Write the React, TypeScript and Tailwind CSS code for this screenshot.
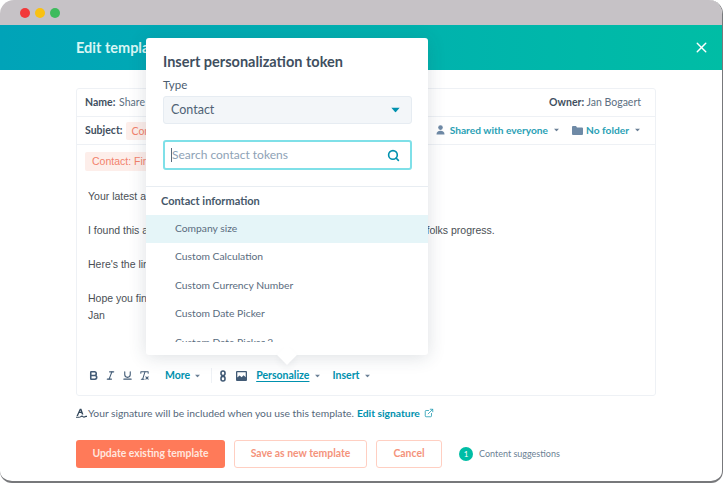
import { Search, X, ExternalLink, Bold, Italic, Underline, RemoveFormatting } from "lucide-react";

function Caret({ className = "" }: { className?: string }) {
  return (
    <svg width="7" height="4" viewBox="0 0 7 4" className={className}>
      <path d="M0 0h7L3.5 4z" fill="currentColor" />
    </svg>
  );
}

function PersonIcon() {
  return (
    <svg width="9" height="10" viewBox="0 0 9 10" className="mr-[5px] text-[#6f8aa6]" fill="currentColor">
      <circle cx="4.5" cy="2.6" r="2.3" />
      <path d="M0.5 9.5C0.5 7 2 5.8 4.5 5.8S8.5 7 8.5 9.5z" />
    </svg>
  );
}

function FolderIcon() {
  return (
    <svg width="11" height="9" viewBox="0 0 11 9" className="ml-[12px] mr-[3px] text-[#6f8aa6]" fill="currentColor">
      <path d="M0 1a1 1 0 0 1 1-1h3l1 1.4h5a1 1 0 0 1 1 1V8a1 1 0 0 1-1 1H1a1 1 0 0 1-1-1z" />
    </svg>
  );
}

function LinkIcon() {
  return (
    <svg width="6" height="12" viewBox="0 0 6 12" className="ml-[8px]" fill="none" stroke="currentColor" strokeWidth="1.6">
      <rect x="1" y="1" width="4" height="4.6" rx="2" />
      <rect x="1" y="6.4" width="4" height="4.6" rx="2" />
    </svg>
  );
}

function PictureIcon() {
  return (
    <svg width="11" height="10" viewBox="0 0 11 10" className="ml-[10px]" fill="currentColor">
      <path fillRule="evenodd" d="M0 1a1 1 0 0 1 1-1h9a1 1 0 0 1 1 1v8a1 1 0 0 1-1 1H1a1 1 0 0 1-1-1zM1.3 1.3v5.2L3.6 4.4l2 1.8 2-2 2.1 2V1.3z" />
    </svg>
  );
}

function SignatureIcon() {
  return (
    <svg width="11" height="10" viewBox="0 0 11 10" className="mr-[1px] text-[#33475b]" fill="currentColor">
      <path d="M0.5 8L3.8 0.8h1.6L7.4 6.5H5.9L5.3 5H3.2L2 8zM3.7 3.8h1.2L4.4 2.3z" />
      <path d="M0 8.8h3c1.5 0 1.5-1.4 3-1.4s1 1.1 2 1.1 1-.7 3-.7v1.2c-1.6 0-2 .7-3 .7s-1.1-1-2-1-1.4 1-3 1H0z" />
    </svg>
  );
}

const tokens = ["Custom Calculation", "Custom Currency Number", "Custom Date Picker"];

function TokenPopover() {
  return (
    <div className="absolute left-[146px] top-[38px] w-[282px] h-[317px] bg-white rounded-[3px] shadow-[0_2px_18px_rgba(45,62,80,0.16)] text-[#33475b]">
      <div className="pl-[17px] pr-[16px] pt-[15px]">
        <div className="text-[14.5px] leading-[18px] font-bold text-[#3f4f60]">Insert personalization token</div>
        <div className="mt-[7px] text-[11.5px] leading-[14px] text-[#4b5d70]">Type</div>
        <div className="mt-[4px] h-[28px] flex items-center justify-between pl-[7px] pr-[12px] bg-[#f3f6f9] border border-[#e6ecf2] rounded-[3px] text-[12.5px] text-[#4f6275]">
          Contact
          <Caret className="text-[#0091ae] scale-125" />
        </div>
        <div className="mt-4 h-[30px] flex items-center justify-between pl-[6px] pr-[10px] border-2 border-[#7fe0e8] rounded-[3px] text-[12px] text-[#8ea2b6]">
          <span className="border-l border-[#5b6b7c] leading-[14px]">Search contact tokens</span>
          <Search size={13} strokeWidth={3} className="text-[#0091ae]" />
        </div>
      </div>
      <div className="mt-[16px] border-t border-[#e8edf2] pt-[6px]">
        <div className="pl-[15px] text-[11px] leading-[16px] font-bold text-[#46586a]">Contact information</div>
        <div className="mt-[6px] h-[28px] pl-[29px] flex items-center bg-[#e5f5f8] text-[10.3px] text-[#5a6c7e]">Company size</div>
        {tokens.map((t) => (
          <div key={t} className="h-[28.3px] pl-[29px] flex items-center text-[10.3px] text-[#5a6c7e]">{t}</div>
        ))}
        <div className="h-[14px] overflow-hidden pl-[29px] pt-[7px] text-[10.3px] leading-[14px] text-[#5a6c7e]">Custom Date Picker 2</div>
      </div>
      <div className="absolute left-[134px] bottom-[-7px] w-[14px] h-[14px] rotate-45 bg-white shadow-[3px_3px_6px_rgba(45,62,80,0.06)]" />
    </div>
  );
}

function Toolbar() {
  return (
    <div className="h-[36px] pb-[3px] flex items-center pl-[11px] text-[#425b76]">
      <div className="flex items-center gap-[6px]">
        <Bold size={11} strokeWidth={3.4} />
        <Italic size={11} strokeWidth={2.4} />
        <Underline size={11} strokeWidth={2.4} />
        <RemoveFormatting size={11} strokeWidth={2.2} />
      </div>
      <div className="ml-[15px] flex items-center gap-[4px] text-[10.5px] font-bold text-[#0091ae]">
        More <Caret className="scale-75 text-[#6b8096]" />
      </div>
      <div className="ml-[10px] w-px h-[15px] bg-[#eef1f5]" />
      <LinkIcon />
      <PictureIcon />
      <div className="ml-[9px] flex items-center gap-[5px] text-[10.5px] font-bold text-[#0091ae]">
        <span className="underline underline-offset-2">Personalize</span>
        <Caret className="scale-75 text-[#6b8096]" />
      </div>
      <div className="ml-[11px] flex items-center gap-[5px] text-[10.5px] font-bold text-[#0091ae]">
        Insert <Caret className="scale-75 text-[#6b8096]" />
      </div>
    </div>
  );
}

function EditorCard() {
  return (
    <div className="ml-[76px] mt-[18px] w-[580px] h-[308px] flex flex-col border border-[#eef1f5] rounded-[3px] text-[#33475b]">
      <div className="h-[28px] shrink-0 flex items-center justify-between pl-[8px] pr-[14px] border-b border-[#eef1f5] text-[10.5px]">
        <div><b className="text-[#3f4f60]">Name:</b> <span className="ml-[1px] text-[#5c6f82]">Share</span></div>
        <div><b className="text-[#3f4f60]">Owner:</b> <span className="text-[#5c6f82]">Jan Bogaert</span></div>
      </div>
      <div className="h-[28px] shrink-0 flex items-center justify-between pl-[8px] pr-[14px] border-b border-[#eef1f5] text-[10.5px]">
        <div className="flex items-center gap-[3px]">
          <b className="text-[#3f4f60]">Subject:</b>
          <span className="px-[6px] leading-[18px] rounded-[2px] bg-[#fdeeea] text-[#f2826c]">Contact</span>
        </div>
        <div className="flex items-center text-[10.2px] font-bold text-[#2a9fb5]">
          <PersonIcon />
          Shared with everyone
          <Caret className="ml-[5px] scale-75 text-[#6b8096]" />
          <FolderIcon />
          No folder
          <Caret className="ml-[5px] scale-75 text-[#6b8096]" />
        </div>
      </div>
      <div className="flex-1 pl-[11px] pt-[7px] font-['Liberation_Sans',sans-serif] text-[10.5px] text-[#4a4f55]">
        <span className="block w-fit -ml-[3px] pl-[7px] pr-[5px] leading-[19px] rounded-[2px] bg-[#fdeeea] text-[#f2826c]">Contact: First name</span>
        <div className="mt-[17px] leading-[16px]">Your latest article</div>
        <div className="mt-[18px] leading-[16px]">I found this article that could help you with your work and it will help your folks progress.</div>
        <div className="mt-[18px] leading-[16px]">Here's the link</div>
        <div className="mt-[18px] leading-[16px]">Hope you find it useful</div>
        <div className="mt-[1px] leading-[16px]">Jan</div>
      </div>
      <Toolbar />
    </div>
  );
}

export default function App() {
  return (
    <div className="relative w-[723px] h-[483px] overflow-hidden bg-white font-['Lato',sans-serif]">
      <div className="h-full flex flex-col rounded-t-[14px] rounded-b-[12px] overflow-hidden bg-white border-r border-b-2 border-[#77787b]">
        <div className="h-[25px] shrink-0 flex items-center gap-[5px] pl-[20px] bg-[#c6c2c6]">
          <span className="w-[10px] h-[10px] rounded-full bg-[#f2393a]" />
          <span className="w-[10px] h-[10px] rounded-full bg-[#f9c112]" />
          <span className="w-[10px] h-[10px] rounded-full bg-[#3dbb5c]" />
        </div>
        <div className="h-[45px] shrink-0 flex items-center justify-between pl-[76px] pr-[12px] bg-gradient-to-r from-[#00a3b8] to-[#00bda5] text-white">
          <span className="text-[14.5px] font-bold text-[#d8f6f4]">Edit template</span>
          <X size={17} strokeWidth={2} />
        </div>
        <EditorCard />
        <div className="mt-[10px] ml-[76px] flex items-center text-[10.3px] leading-[14px] text-[#55687b]">
          <SignatureIcon />
          Your signature will be included when you use this template.
          <b className="ml-[3px] text-[#0091ae]">Edit signature</b>
          <ExternalLink size={10} className="ml-[4px] text-[#2a9fb5]" />
        </div>
        <div className="mt-[20px] ml-[76px] flex items-center text-[10.4px] font-bold">
          <button className="w-[149px] h-[28px] rounded-[3px] bg-[#ff7a59] text-[#ffe6df]">Update existing template</button>
          <button className="ml-[9px] w-[133px] h-[28px] rounded-[3px] border border-[#ffcfc2] text-[#f4937b]">Save as new template</button>
          <button className="ml-[9px] w-[66px] h-[28px] rounded-[3px] border border-[#ffcfc2] text-[#f4937b]">Cancel</button>
          <span className="ml-[17px] w-[14px] h-[14px] rounded-full bg-[#00bda5] text-white flex items-center justify-center text-[8px] font-normal">1</span>
          <span className="ml-[6px] text-[9px] font-normal text-[#6b7f94]">Content suggestions</span>
        </div>
      </div>
      <TokenPopover />
    </div>
  );
}
